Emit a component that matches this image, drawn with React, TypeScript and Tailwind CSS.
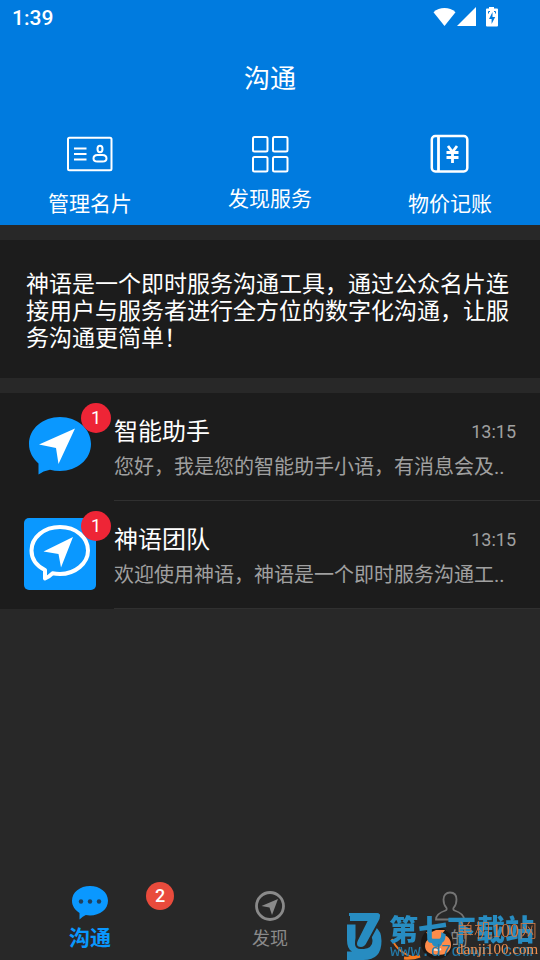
import { useState } from "react";

type Chat = {
  id: string;
  name: string;
  preview: string;
  time: string;
  unread: number;
};

const chats: Chat[] = [
  { id: "assistant", name: "智能助手", preview: "您好，我是您的智能助手小语，有消息会及..", time: "13:15", unread: 1 },
  { id: "team", name: "神语团队", preview: "欢迎使用神语，神语是一个即时服务沟通工..", time: "13:15", unread: 1 },
];

function StatusBar() {
  return (
    <div className="flex h-[38px] items-center justify-between pl-3 pr-[41px]">
      <span className="text-[21px] font-medium">1:39</span>
      <div className="flex items-center pb-1">
        <svg width="23" height="20" viewBox="0 0 23 20" fill="currentColor">
          <path d="M0.5 5.2C6.5-.4 16.500-.4 22.500 5.200L11.500 19z" />
        </svg>
        <svg className="ml-px" width="20" height="20" viewBox="0 0 20 20" fill="currentColor">
          <path d="M19 0v19H0z" />
        </svg>
        <svg className="ml-2" width="14" height="20" viewBox="0 0 14 20">
          <path d="M4 0h5v1.500h3q1 0 1 1v16q0 1-1 1H2q-1 0-1-1v-16q0-1 1-1h2z" fill="currentColor" />
          <path d="M7.500 5L4 12h2.600v5L10.200 10H7.500z" fill="#007bdf" />
          <path d="M3.500 6.500v-2h1.500M10.500 6.500v-2H9" stroke="#007bdf" fill="none" />
        </svg>
      </div>
    </div>
  );
}

function CardIcon() {
  return (
    <svg width="48" height="48" viewBox="0 0 48 48" fill="none" stroke="currentColor" strokeWidth="2">
      <rect x="2" y="6.800" width="43.500" height="32.500" rx="1.500" />
      <path d="M8 17.500h12.500M8 23h12.500M8 28.500h12.500" />
      <ellipse cx="34" cy="18" rx="2.500" ry="3.200" />
      <path d="M31.500 24h5c2.500 0 4 1.500 4 3.500s-1.500 3-4 3h-5c-2.500 0-4-1-4-3s1.500-3.500 4-3.500z" />
    </svg>
  );
}

function GridIcon() {
  return (
    <svg width="38" height="38" viewBox="0 0 38 38" fill="none" stroke="currentColor" strokeWidth="2">
      <rect x="2" y="1" width="14.500" height="14.500" rx="1.500" />
      <rect x="22" y="1" width="14.500" height="14.500" rx="1.500" />
      <rect x="2" y="21" width="14.500" height="14.500" rx="1.500" />
      <rect x="22" y="21" width="14.500" height="14.500" rx="1.500" />
    </svg>
  );
}

function LedgerIcon() {
  return (
    <svg width="48" height="48" viewBox="0 0 48 48" fill="none" stroke="currentColor" strokeWidth="2.500">
      <rect x="5.800" y="5" width="35.500" height="35.500" rx="3.500" />
      <path d="M12.500 5v35" strokeWidth="2.800" />
      <path d="M22 15l4.500 6 4.500-6M26.500 20v12M20.500 21.500h12M20.500 26.500h12" strokeWidth="2.800" />
    </svg>
  );
}

function AssistantAvatar() {
  return (
    <svg width="72" height="72" viewBox="0 0 72 72">
      <path d="M36 7C53 7 67 18.500 67 34S53 61 36 61q-5.500 0-10-1.200Q19 61 14.500 64.500V53.500C9 48.500 5 42 5 34 5 18.500 19 7 36 7z" fill="#0a98ff" />
      <path d="M51 18.500L34.500 54 32 38 15 34.500z" fill="#fff" />
    </svg>
  );
}

function TeamAvatar() {
  return (
    <svg width="72" height="72" viewBox="0 0 72 72">
      <rect width="72" height="72" rx="5" fill="#0a98ff" />
      <path d="M36 9c16 0 28 10.500 28 23.500S51 56 36 56q-4 0-7.500-.7-3.500 3.500-7.500 5.200V52C13 48 7.500 41 7.500 32.500 7.500 19.500 20 9 36 9z" fill="none" stroke="#fff" strokeWidth="4" strokeLinejoin="round" />
      <path d="M49 19L37 49.500 34.500 36 19.500 33.500z" fill="#fff" />
    </svg>
  );
}

function ChatRow({ chat }: { chat: Chat }) {
  return (
    <li>
      <button className="flex w-full text-left">
        <span className="relative my-[17px] ml-6 shrink-0">
          {chat.id === "assistant" ? <AssistantAvatar /> : <TeamAvatar />}
          <span className="absolute -right-[15px] -top-[7px] flex size-[30px] items-center justify-center rounded-full bg-[#ee2536] text-lg text-white">
            {chat.unread}
          </span>
        </span>
        <span className="ml-[18px] flex h-[108px] min-w-0 flex-1 flex-col border-b border-[#303030] pr-6 pt-[23px]">
          <span className="flex items-center justify-between">
            <span className="text-2xl leading-8 text-white">{chat.name}</span>
            <span className="text-lg leading-8 text-[#a0a0a0]">{chat.time}</span>
          </span>
          <span className="mt-[3px] truncate text-xl leading-8 text-[#a0a0a0]">{chat.preview}</span>
        </span>
      </button>
    </li>
  );
}

function ChatTabIcon() {
  return (
    <svg width="38" height="34" viewBox="0 0 38 34">
      <path d="M19 0c10 0 18 6.200 18 14.800S29 29.500 19 29.500q-2 0-4.200-.4-3 1.400-6.300 4.400v-6.500C4 24 1 20 1 14.800 1 6.200 9 0 19 0z" fill="#0a98ff" />
      <circle cx="10" cy="15.500" r="2.200" fill="#20405c" />
      <circle cx="19" cy="15.500" r="2.200" fill="#20405c" />
      <circle cx="28" cy="15.500" r="2.200" fill="#20405c" />
    </svg>
  );
}

function DiscoverTabIcon() {
  return (
    <svg width="32" height="32" viewBox="0 0 32 32">
      <circle cx="16" cy="16" r="13.500" fill="none" stroke="#8a8a8a" strokeWidth="2.800" />
      <path d="M24 9L18 25l-2.500-7.500L7.500 16z" fill="#8a8a8a" />
    </svg>
  );
}

function ProfileTabIcon() {
  return (
    <svg width="32" height="32" viewBox="0 0 32 32" fill="none" stroke="#747474" strokeWidth="1.800">
      <path d="M2 29.500c0-5 5-7.500 9.500-9 1.500-.6 1.500-2 .6-3.200C10.500 15.500 9.500 13 9.500 9.500c0-4.500 2.700-7 6.500-7s6.500 2.500 6.500 7c0 3.500-1 6-2.600 7.800-.9 1.200-.9 2.600.6 3.200 4.500 1.500 9.500 4 9.500 9z" />
    </svg>
  );
}

function Watermark() {
  return (
    <div className="pointer-events-none fixed bottom-0 right-0 h-12 w-[194px] whitespace-nowrap">
      <svg className="absolute left-0 top-0" width="194" height="48" viewBox="0 0 194 48">
        <path d="M46 27c4 10 12 16 24 19" fill="none" stroke="#f47a20" strokeWidth="2" />
        <path d="M58 46q8 1 16-2" fill="none" stroke="#f47a20" strokeWidth="3" />
        <circle cx="91" cy="31" r="16" fill="#1c1815" />
        <path d="M90 18h9l-3 4c6 2 9 5 9 11 0 7-6 10-13 10s-13-3-13-9c0-4 2-6 5-8l-4-6q5 1 10-2z" fill="#ff8c4a" />
        <ellipse cx="91" cy="31" rx="5" ry="4" fill="#278cc1" />
        <path d="M87 37q4 2 8 0" fill="none" stroke="#f1e4dc" strokeWidth="2" />
        {/* the D bowl, then the 7 laid over it */}
        <path d="M1 12.500h8.500V26q-2 10 8 11 9-1 9-8 0-4-3-6l6-8q6 4 6 14 0 19-18 19H1v-8.500h5Q1 37 1 28z" fill="#278cc1" />
        <path d="M3 0h27q5 0 5 4 0 3-2 6L21 32q-2 4-6 4-5 0-5-4 0-2 1-4l9-18H3z" fill="#278cc1" stroke="#282828" strokeWidth="2" />
        <path d="M3 1h27q4 0 4 3H3z" fill="#278cc1" />
      </svg>
      <span className="absolute left-[43px] top-px text-[29px] font-black leading-9 text-[#278cc1]">第七下载站</span>
      <span className="absolute left-11 top-8 font-['Liberation_Mono'] text-[17px] leading-4 text-[#247aa8]">www.d7down.com</span>
      <span className="absolute left-[110px] top-[7px] font-['Liberation_Serif','Noto_Sans_CJK_SC',serif] text-lg font-light leading-6 text-[#d97a43]">单机100网</span>
      <span className="absolute left-[110px] top-[27px] font-['Liberation_Serif'] text-[15px] leading-5 text-[#f0904f]">danji100.com</span>
    </div>
  );
}

export default function App() {
  const [tab, setTab] = useState("chat");

  return (
    <div className="flex min-h-screen flex-col bg-[#282828] font-[Roboto,'Noto_Sans_CJK_SC',sans-serif]">
      <header className="bg-[#007bdf] text-white">
        <StatusBar />
        <h1 className="flex h-[82px] items-center justify-center text-[26px]">沟通</h1>
        <div className="grid grid-cols-3 items-center pb-2 pt-[11px] text-[21px] leading-[26px]">
          <button className="flex flex-col items-center gap-3">
            <CardIcon />
            管理名片
          </button>
          <button className="flex flex-col items-center gap-3">
            <GridIcon />
            发现服务
          </button>
          <button className="flex flex-col items-center gap-3">
            <LedgerIcon />
            物价记账
          </button>
        </div>
      </header>

      <main className="flex flex-col gap-[15px] pt-[15px]">
        <p className="bg-[#1c1c1c] px-[26px] pb-[26px] pt-[31px] text-[23px] leading-[27px] text-white">
          神语是一个即时服务沟通工具，通过公众名片连接用户与服务者进行全方位的数字化沟通，让服务沟通更简单！
        </p>
        <ul className="bg-[#1c1c1c]">
          {chats.map((chat) => (
            <ChatRow key={chat.id} chat={chat} />
          ))}
        </ul>
      </main>

      <nav className="mt-auto grid grid-cols-3 pb-2">
        <button
          onClick={() => setTab("chat")}
          className={`relative flex flex-col items-center justify-end ${tab === "chat" ? "text-[#0a98ff]" : "text-[#8a8a8a]"}`}
        >
          <ChatTabIcon />
          <span className="mt-1 text-[21px] font-bold leading-7">沟通</span>
          <span className="absolute -top-1 left-1/2 ml-14 flex size-7 items-center justify-center rounded-full bg-[#e94b3c] text-lg font-medium text-white">
            2
          </span>
        </button>
        <button
          onClick={() => setTab("discover")}
          className={`flex flex-col items-center justify-end ${tab === "discover" ? "text-[#0a98ff]" : "text-[#8a8a8a]"}`}
        >
          <DiscoverTabIcon />
          <span className="mt-1 text-lg leading-[26px]">发现</span>
        </button>
        <button
          onClick={() => setTab("me")}
          className={`flex flex-col items-center justify-end ${tab === "me" ? "text-[#0a98ff]" : "text-[#8a8a8a]"}`}
        >
          <ProfileTabIcon />
          <span className="mt-1 text-lg leading-[26px]">我的</span>
        </button>
      </nav>

      <Watermark />
    </div>
  );
}
